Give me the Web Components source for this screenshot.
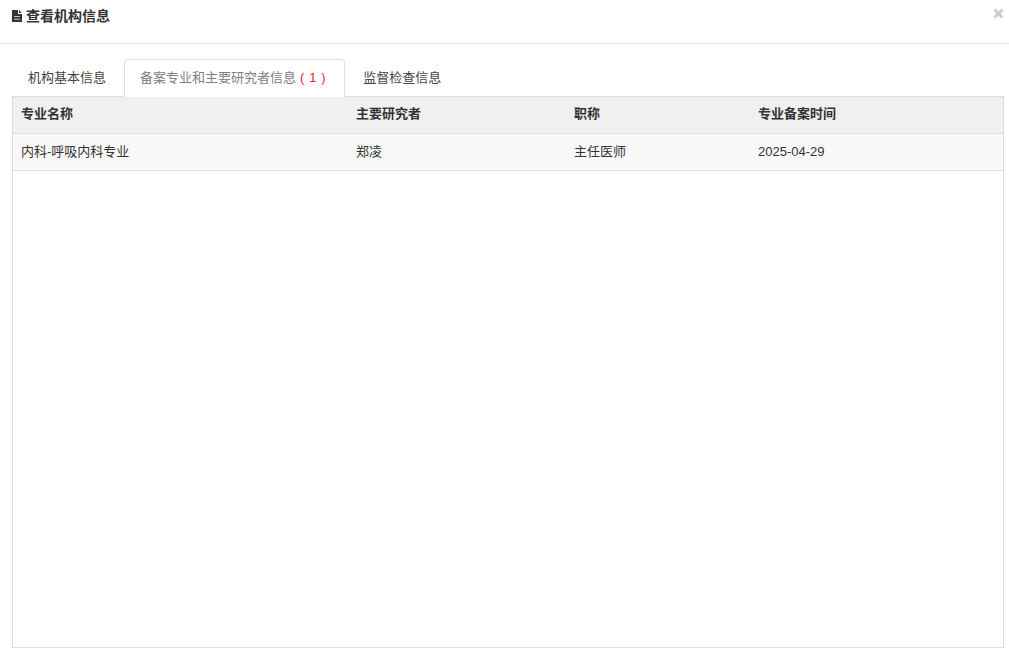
<!DOCTYPE html>
<html lang="zh">
<head>
<meta charset="utf-8">
<title>查看机构信息</title>
<style>
  html, body { margin: 0; background: #fff; }
  body { font-family: "Liberation Sans", "Noto Sans CJK SC", sans-serif; font-size: 13px; color: #333; }
</style>
</head>
<body>
<org-dialog title-text="查看机构信息">
  <org-tabs>
    <org-tab>机构基本信息</org-tab>
    <org-tab active>备案专业和主要研究者信息<span style="color:#f22;margin:0 3px 0 4px;letter-spacing:.6px">(&nbsp;1&nbsp;)</span></org-tab>
    <org-tab>监督检查信息</org-tab>
  </org-tabs>
  <org-table>
    <org-row head>
      <span>专业名称</span><span>主要研究者</span><span>职称</span><span>专业备案时间</span>
    </org-row>
    <org-row>
      <span>内科-呼吸内科专业</span><span>郑凌</span><span>主任医师</span><span>2025-04-29</span>
    </org-row>
  </org-table>
</org-dialog>

<script>
  class OrgDialog extends HTMLElement {
    constructor() {
      super();
      this.attachShadow({ mode: 'open' });
      this.shadowRoot.innerHTML = `
        <style>
          :host { display: block; width: 1009px; height: 662px; overflow: hidden; background: #fff; }
          header { height: 43px; border-bottom: 1px solid #e5e5e5; padding-left: 12px; display: flex; justify-content: space-between; align-items: flex-start; }
          h4 { margin: 8px 0 0; font-size: 14px; line-height: 16px; font-weight: bold; color: #333; display: flex; align-items: center; gap: 4px; }
          svg { display: block; }
          .close { margin: 8px 5px 0 0; }
          main { padding: 15px 5px 0 12px; }
        </style>
        <header>
          <h4>
            <svg width="10" height="12" viewBox="0 0 10 12"><path fill="#333" fill-rule="evenodd" d="M0 0h6v4h4v8H0z M7 0l3 3H7z M2 6.300v.7h6v-.7z M2 8.800v.7h6v-.7z"/></svg>
            <span></span>
          </h4>
          <svg class="close" width="11" height="11" viewBox="0 0 11 11"><path d="M1.500 1.500l8 8M9.500 1.500l-8 8" stroke="#ccc" stroke-width="3"/></svg>
        </header>
        <main><slot></slot></main>`;
      this.shadowRoot.querySelector('h4 span').textContent = this.getAttribute('title-text');
    }
  }

  class OrgTabs extends HTMLElement {
    constructor() {
      super();
      this.attachShadow({ mode: 'open' });
      this.shadowRoot.innerHTML = `
        <style>
          :host { display: flex; gap: 2px; height: 37px; position: relative; z-index: 1; }
        </style>
        <slot></slot>`;
    }
  }

  class OrgTab extends HTMLElement {
    constructor() {
      super();
      this.attachShadow({ mode: 'open' });
      this.shadowRoot.innerHTML = `
        <style>
          :host { display: block; box-sizing: border-box; height: 38px; padding: 0 15px; line-height: 35px; color: #444; border: 1px solid transparent; border-bottom: 0; border-radius: 4px 4px 0 0; white-space: nowrap; }
          :host([active]) { color: #808080; background: #fff; border-color: #ddd; }
        </style>
        <slot></slot>`;
    }
  }

  class OrgTable extends HTMLElement {
    constructor() {
      super();
      this.attachShadow({ mode: 'open' });
      this.shadowRoot.innerHTML = `
        <style>
          :host { display: block; box-sizing: border-box; width: 992px; height: 552px; border: 1px solid #ddd; }
        </style>
        <slot></slot>`;
    }
  }

  class OrgRow extends HTMLElement {
    constructor() {
      super();
      this.attachShadow({ mode: 'open' });
      this.shadowRoot.innerHTML = `
        <style>
          :host { display: grid; grid-template-columns: 335px 218px 184px 1fr; height: 37px; box-sizing: border-box; border-bottom: 1px solid #ddd; background: #f9f9f9; line-height: 36px; color: #333; }
          :host([head]) { background: #f0f0f0; font-weight: bold; line-height: 34px; }
          ::slotted(span) { padding-left: 8px; white-space: nowrap; }
        </style>
        <slot></slot>`;
    }
  }

  customElements.define('org-dialog', OrgDialog);
  customElements.define('org-tabs', OrgTabs);
  customElements.define('org-tab', OrgTab);
  customElements.define('org-table', OrgTable);
  customElements.define('org-row', OrgRow);
</script>
</body>
</html>
